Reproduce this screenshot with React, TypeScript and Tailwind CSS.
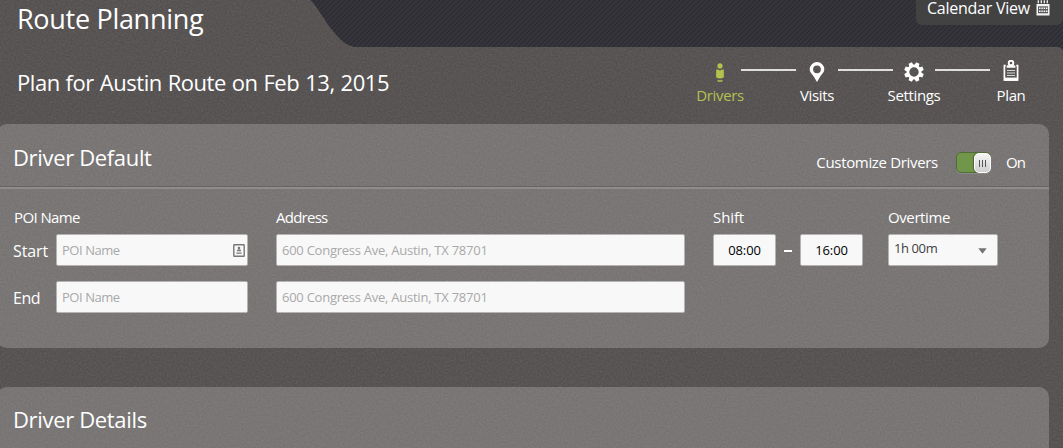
import type { ReactNode } from 'react';

function Texture() {
  return (
    <svg className="pointer-events-none absolute inset-0 -z-10 h-full w-full" aria-hidden="true">
      <filter id="grain" x="0" y="0" width="100%" height="100%" colorInterpolationFilters="sRGB">
        <feTurbulence type="fractalNoise" baseFrequency="0.55" numOctaves="2" seed="4" />
        <feColorMatrix values="0.8 0.8 0.8 0 -0.85  0.8 0.8 0.8 0 -0.85  0.8 0.8 0.8 0 -0.85  0 0 0 0 0.06" />
      </filter>
      <rect width="100%" height="100%" filter="url(#grain)" />
    </svg>
  );
}

function HeaderShape() {
  return (
    <svg className="absolute top-0 left-[305px] -z-10" width="758" height="54" viewBox="305 0 758 54" aria-hidden="true">
      <defs>
        <pattern id="hatch" width="5" height="5" patternUnits="userSpaceOnUse">
          <rect width="5" height="5" fill="#35343b" />
          <path d="M-1 1L1 -1M0 5L5 0M4 6L6 4" stroke="#29282f" strokeWidth="1" />
        </pattern>
      </defs>
      <path d="M310.500 0C319 9 325 22 333 31C340 40 346 45 354 47H1057Q1062 47 1063 51V0Z" fill="url(#hatch)" />
    </svg>
  );
}

function CalendarIcon() {
  return (
    <svg width="14" height="16" viewBox="0 0 14 16" aria-hidden="true">
      <path d="M.5 4H13.500V15.500H.5Z" fill="#f4f4f4" />
      <path d="M1.500 0v3M4.500 0v3M7.500 0v3M10.500 0v3" stroke="#f4f4f4" strokeWidth="1.300" transform="translate(.8 .3)" />
      <path d="M2 6.300H12V13.300H2Z" fill="#5b5b5b" />
      <path d="M3 8.300h8.500M3 11.300h8.500" stroke="#f4f4f4" strokeWidth="1.600" strokeDasharray="1.500 .8" />
    </svg>
  );
}

function DriverIcon() {
  return (
    <svg width="10" height="20" viewBox="0 0 10 20" fill="#b3c14f" aria-hidden="true">
      <circle cx="5" cy="3.900" r="2.600" />
      <path d="M1.200 7.600Q3 7.200 3.500 7.800Q5 9 6.500 7.800Q7 7.200 8.800 7.600L8.900 15.300Q5 17.700 1.100 15.300Z" />
      <path d="M2.300 17.700Q5 18.700 7.700 17.700L7.200 19.800H2.800Z" />
    </svg>
  );
}

function PinIcon() {
  return (
    <svg width="16" height="20" viewBox="0 0 16 20" aria-hidden="true">
      <path fillRule="evenodd" fill="#fff" d="M8 0A7.300 7.300 0 0 0 .7 7.300C.7 10.500 3.500 12.300 5 15L8 20L11 15C12.500 12.300 15.300 10.500 15.300 7.300A7.300 7.300 0 0 0 8 0ZM8 3.400A3.900 3.900 0 1 1 8 11.200A3.900 3.900 0 1 1 8 3.400Z" />
    </svg>
  );
}

const TEETH = [22.5, 67.5, 112.5, 157.5, 202.5, 247.5, 292.5, 337.5];

function GearIcon() {
  return (
    <svg width="20" height="20" viewBox="0 0 20 20" aria-hidden="true">
      <circle cx="10" cy="10" r="6.100" fill="none" stroke="#fff" strokeWidth="2.800" />
      {TEETH.map((angle) => (
        <path key={angle} d="M7.700 3.800L8.200 .2H11.800L12.300 3.800Z" fill="#fff" transform={`rotate(${angle} 10 10)`} />
      ))}
    </svg>
  );
}

function ClipboardIcon() {
  return (
    <svg width="16" height="22" viewBox="0 0 16 22" aria-hidden="true">
      <path d="M2.800 5.500H1.400V20H14.600V5.500H13.200" fill="none" stroke="#fff" strokeWidth="1.700" />
      <path d="M1 17.600H15V20.800H1Z" fill="#fff" />
      <circle cx="8" cy="3" r="2.300" fill="none" stroke="#fff" strokeWidth="1.900" />
      <path d="M3.600 7.800V6.500Q3.600 5.300 5 5.300H11Q12.400 5.300 12.400 6.500V7.800Z" fill="#fff" />
      <path d="M4 10.500H12M4 13H12M4 15.500H12" stroke="#d6d5d5" strokeWidth="1.200" />
    </svg>
  );
}

function ContactIcon() {
  return (
    <svg width="12" height="13" viewBox="0 0 12 13" aria-hidden="true">
      <rect x=".8" y=".8" width="10.400" height="11.400" rx=".5" fill="#f8f8f8" stroke="#777" strokeWidth="1.400" />
      <circle cx="6" cy="4" r="1.300" fill="#777" />
      <path d="M3.700 7.300Q3.700 5.300 6 5.300T8.300 7.300ZM3.400 8.600H8.600V9.700H3.400Z" fill="#777" />
    </svg>
  );
}

function Step({ icon, label, active = false }: { icon: ReactNode; label: string; active?: boolean }) {
  return (
    <div className="flex w-[42px] flex-col items-center">
      <div className="flex h-[22px] items-end justify-center">{icon}</div>
      <span className={`mt-[3px] text-[15px] leading-[20px] tracking-[-0.35px] whitespace-nowrap ${active ? 'text-[#b3c14f]' : 'text-white'}`}>
        {label}
      </span>
    </div>
  );
}

function StepLine() {
  return <div className="mt-[9px] h-[2px] w-[55px] bg-[#dededd]" />;
}

const fieldBox = 'h-[32px] rounded-[2px] border border-[#b5b3b3] bg-[#f8f8f8] leading-[30px] text-[13px]';

function TextField({ placeholder, className, children }: { placeholder: string; className: string; children?: ReactNode }) {
  return (
    <div className={`flex items-center justify-between pr-[2px] pl-[5px] whitespace-nowrap text-[#a9a9a9] ${fieldBox} ${className}`}>
      <span>{placeholder}</span>
      {children}
    </div>
  );
}

function FieldLabel({ children, className = '' }: { children: ReactNode; className?: string }) {
  return <div className={`h-[27px] text-[15px] leading-[20px] whitespace-nowrap ${className}`}>{children}</div>;
}

function TimeField({ value }: { value: string }) {
  return <div className={`w-[63px] text-center tracking-[-0.1px] text-black ${fieldBox}`}>{value}</div>;
}

function Toggle() {
  return (
    <div className="flex h-[21px] w-[35px] justify-end rounded-[5px] border border-[#536b37] bg-[#71964a] shadow-[0_1px_0_#8d8b8a]">
      <div className="-mr-px flex h-[20px] w-[17px] items-center justify-center gap-[2px] rounded-[5px] border border-white bg-linear-to-b from-[#f5f5f5] to-[#cfcfcf] shadow-[-1px_0_1px_#4e6335]">
        <i className="h-[7px] w-px bg-[#555]" />
        <i className="h-[7px] w-px bg-[#555]" />
        <i className="h-[7px] w-px bg-[#555]" />
      </div>
    </div>
  );
}

export default function App() {
  return (
    <div className="relative isolate h-[448px] w-[1063px] overflow-hidden bg-[#585453] font-['Open_Sans','Trebuchet_MS',sans-serif] text-white">
      <Texture />
      <HeaderShape />

      <header className="flex h-[47px] items-start justify-between">
        <h1 className="pl-[17px] text-[27px] leading-[37px] tracking-[-0.3px] whitespace-nowrap">Route Planning</h1>
        <div className="flex h-[25px] w-[147px] items-start gap-[6px] rounded-b-[6px] bg-[#424242] pl-[11px]">
          <span className="text-[16px] leading-[17px] tracking-[-0.25px] whitespace-nowrap">Calendar View</span>
          <CalendarIcon />
        </div>
      </header>

      <section className="flex h-[77px] items-start justify-between pr-[31px] pl-[17px]">
        <h2 className="mt-[21px] text-[22px] leading-[29px] tracking-[-0.45px] whitespace-nowrap [word-spacing:0.6px]">Plan for Austin Route on Feb 13, 2015</h2>
        <nav className="mt-[13px] flex">
          <Step icon={<DriverIcon />} label="Drivers" active />
          <StepLine />
          <Step icon={<PinIcon />} label="Visits" />
          <StepLine />
          <Step icon={<GearIcon />} label="Settings" />
          <StepLine />
          <Step icon={<ClipboardIcon />} label="Plan" />
        </nav>
      </section>

      <section className="-ml-[3px] h-[224px] w-[1052px] rounded-[10px] bg-white/20">
        <div className="flex h-[65px] items-center justify-between border-b-2 border-b-[#8f8d8c] pr-[24px] pl-[16px] shadow-[inset_0_-1px_0_#676463]">
          <h3 className="mt-[2px] text-[22px] leading-[30px] tracking-[-0.34px] whitespace-nowrap">Driver Default</h3>
          <div className="mt-[14px] flex items-center text-[15px] leading-[20px] whitespace-nowrap">
            <span className="-mt-px mr-[18px] tracking-[-0.33px]">Customize Drivers</span>
            <Toggle />
            <span className="-mt-px ml-[15px] tracking-[-0.9px]">On</span>
          </div>
        </div>

        <div className="flex pt-[18px] pl-[16px]">
          <div className="w-[263px]">
            <FieldLabel className="pl-px tracking-[-0.6px]">POI Name</FieldLabel>
            <div className="flex h-[32px] items-center">
              <span className="w-[43px] pt-px text-[16px] tracking-[-0.1px]">Start</span>
              <TextField placeholder="POI Name" className="w-[192px] tracking-[-0.45px]">
                <ContactIcon />
              </TextField>
            </div>
            <div className="mt-[15px] flex h-[32px] items-center">
              <span className="w-[43px] pt-px text-[16px] tracking-[-0.5px]">End</span>
              <TextField placeholder="POI Name" className="w-[192px] tracking-[-0.45px]" />
            </div>
          </div>
          <div className="w-[437px]">
            <FieldLabel className="tracking-[-0.75px]">Address</FieldLabel>
            <TextField placeholder="600 Congress Ave, Austin, TX 78701" className="w-[409px] tracking-[-0.25px]" />
            <TextField placeholder="600 Congress Ave, Austin, TX 78701" className="mt-[15px] w-[409px] tracking-[-0.25px]" />
          </div>
          <div className="w-[175px]">
            <FieldLabel className="tracking-[-0.1px]">Shift</FieldLabel>
            <div className="flex items-center">
              <TimeField value="08:00" />
              <div className="mx-[8px] mt-[2px] h-[2px] w-[8px] bg-white" />
              <TimeField value="16:00" />
            </div>
          </div>
          <div>
            <FieldLabel className="tracking-[-0.4px]">Overtime</FieldLabel>
            <div className={`flex w-[110px] items-start justify-between pr-[10px] pl-[5px] text-[#3f3f3f] ${fieldBox}`}>
              <span className="leading-[27px] tracking-[-0.4px] whitespace-nowrap">1h 00m</span>
              <svg className="mt-[13px]" width="9" height="6" viewBox="0 0 9 6" aria-hidden="true">
                <path d="M.3 .3H8.700L4.500 5.700Z" fill="#747474" />
              </svg>
            </div>
          </div>
        </div>
      </section>

      <section className="mt-[39px] -ml-[3px] h-[80px] w-[1052px] rounded-t-[10px] bg-white/20">
        <h3 className="pt-[17px] pl-[16px] text-[22px] leading-[30px] tracking-[-0.34px] whitespace-nowrap">Driver Details</h3>
      </section>
    </div>
  );
}
